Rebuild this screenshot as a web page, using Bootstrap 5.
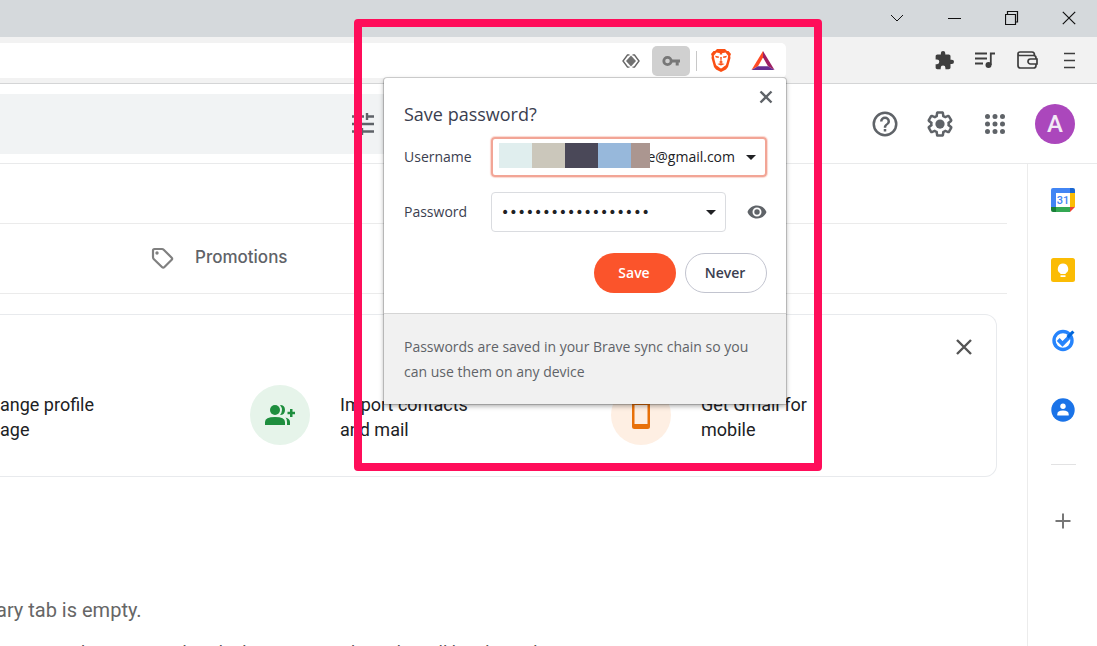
<!DOCTYPE html>
<html lang="en">
<head>
<meta charset="utf-8">
<meta name="viewport" content="width=device-width, initial-scale=1">
<title>Inbox - Gmail</title>
<link href="https://cdn.jsdelivr.net/npm/bootstrap@5.3.0/dist/css/bootstrap.min.css" rel="stylesheet">
<style>
  body { height: 100vh; overflow: hidden; font-family: Roboto, "Liberation Sans", sans-serif; color: #202124; background: #fff; }
  svg { display: block; flex: none; }
  .plain { border: 0; padding: 0; background: none; color: inherit; display: flex; align-items: center; justify-content: center; }

  /* browser chrome */
  .window-bar { height: 37px; background: #d5d9dc; }
  .window-bar .plain { width: 57px; height: 36px; color: #111; }
  .tool-bar { height: 47px; background: #f2f2f2; border-bottom: 1px solid #d4d5d6; color: #3e3e3e; }
  .address { height: 35px; background: #fff; border-radius: 0 5px 5px 0; margin-top: 6px; }
  .address .key-btn { width: 38px; height: 30px; border-radius: 5px; background: #d0d0d0; color: #777; }
  .split { width: 1px; height: 20px; background: #c8c8c8; margin: 0 14px 0 6px; }
  .shield { margin-right: 20px; }
  .rewards { margin-right: 11px; }
  .tool-icons { width: 311px; gap: 18px; padding-right: 16px; }
  .tool-icons .plain { width: 24px; height: 24px; }

  /* gmail header */
  .mail-head { height: 80px; border-bottom: 1px solid #e9eaeb; color: #5f6368; }
  .search { width: 64%; height: 60px; background: #f1f3f4; margin-top: 10px; }
  .search .plain { margin-left: 349px; }
  .head-icons { gap: 25px; padding-right: 22px; }
  .avatar { width: 40px; height: 40px; border-radius: 50%; background: #ab47bc; color: #f3e9f6; font-size: 24px; font-weight: 500; }

  /* mail area */
  .mail { padding-right: 20px; overflow: hidden; }
  .strip { height: 60px; border-bottom: 1px solid #ebebeb; }
  .tabs { height: 70px; border-bottom: 1px solid #ebebeb; color: #5f6368; padding-left: 150px; }
  .tabs a { color: inherit; font: 500 17px/24px Inter, sans-serif; gap: 20px; }
  .setup { margin: 20px 10px 0 0; height: 163px; border: 1px solid #e8eaed; border-left: 0; border-radius: 0 12px 12px 0; color: #555; }
  .steps { display: grid; grid-template-columns: 250px 361px 1fr; padding-top: 70px; align-items: center; }
  .steps a { color: #202124; font-size: 18px; line-height: 25px; gap: 30px; }
  .step-text { padding-top: 4px; }
  .disc { width: 60px; height: 60px; border-radius: 50%; }
  .disc-green { background: #e6f4ea; }
  .disc-orange { background: #feefe3; }
  .setup .plain { top: 22px; right: 22px; }
  .empty { margin: 120px 0 0 -4px; font-size: 20px; line-height: 26px; color: #666; }
  .hint { width: 573px; margin-top: 18px; font-size: 18px; line-height: 24px; color: #555; white-space: nowrap; }

  .side { width: 70px; border-left: 1px solid #ececec; padding: 22px 0 0 1px; gap: 42px; }
  .side .plain { width: 28px; height: 28px; }
  .side hr { width: 25px; margin: -2px 0 0; border-color: #8a8d91; }

  /* password bubble */
  .bubble { top: 78px; right: 311px; width: 402px; background: #fff; box-shadow: 0 0 0 1px rgba(0,0,0,.16), 0 2px 5px rgba(0,0,0,.35); font: 14px/25px "Open Sans", "Noto Sans", sans-serif; color: #3b3e4f; border-radius: 3px 3px 0 0; }
  .bubble-body { padding: 24px 19px 20px 20px; }
  .bubble h1 { font-size: 18px; line-height: 25px; margin: 0 0 10px; font-weight: 400; }
  .bubble label { width: 87px; padding-bottom: 2px; }
  .close-btn { top: 10px; right: 11px; color: #5f6368; width: 18px; height: 18px; }
  .pass-row { margin-top: 15px; }
  .choices { gap: 9px; margin-top: 21px; }
  .show-btn { margin-left: 21px; color: #5f6368; }
  .field { height: 40px; border: 1px solid #dadce0; border-radius: 4px; color: #202124; }
  .field input { border: 0; outline: 0; background: none; min-width: 0; padding: 0 0 2px; color: inherit; }
  .field .plain { width: 11px; margin: 0 9px 0 10px; }
  .field.active { border: 2px solid #f2a596; box-shadow: 0 0 1px 1px #fbd8d0; }
  .field input[type=password] { font-family: "DejaVu Sans", sans-serif; font-size: 14px; padding: 0 0 0 9px; }
  .mosaic { left: 6px; top: 4px; height: 25px; width: 151px; }
  .mosaic i { width: 33px; }
  .pill { width: 82px; height: 40px; border-radius: 20px; padding: 0 2px 2px 0; font-size: 14px; font-weight: 600; }
  .pill-save, .pill-save:hover { background: #fb542b; color: #fff; }
  .pill-never { border: 1px solid #c2c4cf; color: #3b3e4f; }
  .bubble-foot { padding: 20px; background: #f1f1f1; border-top: 1px solid #d5d5d5; color: #5f6368; }

  .marker { top: 19px; right: 275px; width: 468px; height: 452px; border: 8px solid #ff0d5a; border-radius: 4px; pointer-events: none; }
</style>
</head>
<body class="d-flex flex-column position-relative">

<div class="window-bar d-flex justify-content-end flex-shrink-0">
  <button class="plain" aria-label="Search tabs"><svg width="14" height="14" fill="none" stroke="currentColor"><path d="M0 4l6 6 6-6"/></svg></button>
  <button class="plain" aria-label="Minimize"><svg width="14" height="14" fill="none" stroke="currentColor"><path d="M0 7.500h13"/></svg></button>
  <button class="plain" aria-label="Restore"><svg width="14" height="14" fill="none" stroke="currentColor" stroke-width="1.200"><path d="M.5 3.500h10v10H.5zM2.500 3V.500h10v10.500H11"/></svg></button>
  <button class="plain" aria-label="Close"><svg width="14" height="14" fill="none" stroke="currentColor" stroke-width="1.200"><path d="M.8.8l12.400 12.400M13.200.8L.8 13.200"/></svg></button>
</div>

<div class="tool-bar d-flex flex-shrink-0">
  <div class="address flex-grow-1 d-flex align-items-center justify-content-end">
    <button class="plain me-2 pe-1" aria-label="Open link"><svg width="18" height="14" viewBox="0 0 18 14"><path d="M9 1.500l5 5.500-5 5.500L4 7z" fill="#707070"/><path d="M7.500.9L5.500 1 1 7l4.500 6 2 .1M10.500.9l2 .1L17 7l-4.500 6-2 .1" fill="none" stroke="#666" stroke-width="1.400"/></svg></button>
    <button class="plain key-btn" aria-label="Manage passwords"><svg width="18" height="12" viewBox="0 0 18 12"><circle cx="5.500" cy="6" r="3.700" fill="none" stroke="currentColor" stroke-width="2.800"/><path d="M9 4.600h9v3h-1.300v3h-3v-3H9z" fill="currentColor"/></svg></button>
    <span class="split"></span>
    <button class="plain shield" aria-label="Brave Shields"><svg width="20" height="23" viewBox="0 0 20 23"><path d="M6 0h8l2 2h1.500L20 5l-.8 2 .3 2-2.500 9-2 2.500L10 23l-5-2.500L3 18 .5 9l.3-2L0 5l2.500-3H4z" fill="#fb4f14"/><path d="M5.500 3.600L8 4h4l2.500-.4 2.700 3.200-.5 3-1.200 4.400-.7 2-1.500 1.100-2.300 1.600-1 .7-1-.7-2.300-1.600-1.500-1.100-.7-2-1.200-4.400-.5-3z" fill="#fff"/><path d="M4 6.800l4 .8-.4 1.300-2.700-.5zM16 6.800l-4 .8.400 1.300 2.700-.5zM9.200 8h1.600l-.3 4 1.500 1-2 1.200L8 13l1.500-1zM6.300 15l3.700-.9 3.700.9L10 16.600zM8.800 4h2.400v1.500H8.800z" fill="#fb4f14"/></svg></button>
    <button class="plain rewards" aria-label="Brave Rewards"><svg width="24" height="21" viewBox="0 0 24 21"><path d="M12 1v6.500L7 16.300.5 20z" fill="#ff4a24"/><path d="M12 1v6.500l5 8.800 6.500 3.700z" fill="#9e1f63"/><path d="M.5 20L7 16.300h10l6.500 3.700z" fill="#662d91"/></svg></button>
  </div>
  <div class="tool-icons d-flex align-items-center justify-content-end">
    <button class="plain" aria-label="Extensions"><svg width="21" height="21" viewBox="0 0 24 24" fill="currentColor"><path d="M21.500 11H20V7c0-1.100-.9-2-2-2h-4V3.500a2.500 2.500 0 0 0-5 0V5H5c-1.100 0-2 .9-2 2v3.800h1.500a2.700 2.700 0 0 1 0 5.400H3V20c0 1.100.9 2 2 2h3.800v-1.500a2.700 2.700 0 0 1 5.400 0V22H18c1.100 0 2-.9 2-2v-4h1.500a2.500 2.500 0 0 0 0-5z"/></svg></button>
    <button class="plain" aria-label="Media"><svg width="20" height="17" viewBox="0 0 20 17" fill="none" stroke="currentColor" stroke-width="1.800"><path d="M0 1.500h12M0 6.500h12M0 11.500h8M15.800 13V1.500H20"/><circle cx="13.500" cy="13" r="3" fill="currentColor" stroke="none"/></svg></button>
    <button class="plain" aria-label="Wallet"><svg width="21" height="18" viewBox="0 0 21 18" fill="none" stroke="currentColor" stroke-width="1.700"><path d="M1 3v11.500Q1 17 3.500 17h13q2.500 0 2.500-2.500V7q0-2.500-2.500-2.500h-14Q1 4.500 1 2.800T3 1h12q2.500 0 2.500 3"/><path d="M20 8h-6.500a2.500 2.500 0 0 0 0 5H20z" fill="#f2f2f2"/></svg></button>
    <button class="plain" aria-label="Menu"><svg width="12" height="17" viewBox="0 0 12 17" fill="none" stroke="currentColor" stroke-width="1.700"><path d="M1 1.500h11M1 8.500h11M1 15.500h11"/></svg></button>
  </div>
</div>

<header class="mail-head d-flex justify-content-between flex-shrink-0">
  <div class="search d-flex align-items-center">
    <button class="plain" aria-label="Search options"><svg width="28" height="24" viewBox="0 0 28 24" fill="none" stroke="currentColor" stroke-width="2.400"><path d="M3 4.500h12M18 4.500h7M3 12h22M3 19.500h7M13 19.500h12M18 1v7M13 16v7"/></svg></button>
  </div>
  <div class="head-icons d-flex align-items-center">
    <button class="plain" aria-label="Support"><svg width="30" height="30" viewBox="0 0 24 24" fill="currentColor"><path d="M11 18h2v-2h-2zm1-16a10 10 0 1 0 0 20 10 10 0 0 0 0-20zm0 18a8 8 0 1 1 0-16 8 8 0 0 1 0 16zm0-14a4 4 0 0 0-4 4h2a2 2 0 1 1 4 0c0 2-3 1.750-3 5h2c0-2.250 3-2.500 3-5a4 4 0 0 0-4-4z"/></svg></button>
    <button class="plain" aria-label="Settings"><svg width="30" height="30" viewBox="0 0 24 24" fill="currentColor"><path d="M13.850 22.250h-3.700c-.74 0-1.360-.54-1.450-1.270l-.27-1.890c-.27-.14-.53-.29-.79-.46l-1.800.72c-.7.260-1.470-.03-1.810-.65L2.200 15.530c-.35-.66-.2-1.440.36-1.880l1.530-1.190c-.01-.15-.02-.3-.02-.46 0-.15.010-.31.020-.46l-1.520-1.190c-.59-.45-.74-1.260-.37-1.880l1.850-3.190c.34-.62 1.110-.9 1.790-.63l1.810.73c.26-.17.520-.32.780-.46l.27-1.910c.09-.7.710-1.250 1.440-1.250h3.700c.74 0 1.360.54 1.450 1.270l.27 1.890c.27.140.53.290.79.460l1.800-.72c.71-.26 1.480.03 1.820.65l1.840 3.180c.36.660.2 1.440-.36 1.880l-1.520 1.190c.01.150.02.3.020.46s-.01.310-.02.460l1.520 1.190c.56.450.72 1.230.37 1.860l-1.860 3.220c-.34.620-1.110.9-1.800.63l-1.800-.72c-.26.170-.52.320-.78.460l-.27 1.910c-.1.680-.72 1.220-1.460 1.220zm-3.230-2h2.760l.37-2.550.53-.22c.44-.18.880-.44 1.340-.78l.45-.34 2.380.96 1.380-2.400-2.030-1.580.07-.56c.03-.26.060-.51.060-.78s-.03-.53-.06-.78l-.07-.56 2.030-1.580-1.390-2.400-2.390.96-.45-.35c-.42-.32-.87-.58-1.330-.77l-.52-.22-.37-2.550h-2.760l-.37 2.550-.53.210c-.44.190-.88.440-1.340.79l-.45.330-2.380-.95-1.390 2.390 2.030 1.580-.07.560a7 7 0 0 0-.06.790c0 .26.020.53.060.78l.07.560-2.030 1.580 1.380 2.400 2.390-.96.450.35c.43.330.86.580 1.330.77l.53.220z"/><circle cx="12" cy="12" r="3.700"/></svg></button>
    <button class="plain" aria-label="Google apps"><svg width="30" height="30" viewBox="0 0 24 24" fill="currentColor"><path d="M6 8a2 2 0 1 0 0-4 2 2 0 0 0 0 4zm6 0a2 2 0 1 0 0-4 2 2 0 0 0 0 4zm6 0a2 2 0 1 0 0-4 2 2 0 0 0 0 4zM6 14a2 2 0 1 0 0-4 2 2 0 0 0 0 4zm6 0a2 2 0 1 0 0-4 2 2 0 0 0 0 4zm6 0a2 2 0 1 0 0-4 2 2 0 0 0 0 4zM6 20a2 2 0 1 0 0-4 2 2 0 0 0 0 4zm6 0a2 2 0 1 0 0-4 2 2 0 0 0 0 4zm6 0a2 2 0 1 0 0-4 2 2 0 0 0 0 4z"/></svg></button>
    <button class="plain avatar" aria-label="Account">A</button>
  </div>
</header>

<div class="d-flex flex-grow-1 overflow-hidden">
  <main class="mail flex-grow-1">
    <div class="strip"></div>
    <nav class="tabs d-flex align-items-center">
      <a href="#" class="d-flex align-items-center text-decoration-none"><svg width="25" height="25" viewBox="0 0 25 25" fill="none" stroke="#808080" stroke-width="2.200"><path d="M3 4.500Q3 3 4.500 3H12q1 0 1.700.7l8 8q1 1 0 2l-7.500 7.500q-1 1-2 0L3.700 13Q3 12.300 3 11z"/><circle cx="7" cy="7" r="1.700" fill="#808080" stroke="none"/></svg><span class="pb-1">Promotions</span></a>
    </nav>
    <section class="setup position-relative">
      <button class="plain position-absolute" aria-label="Dismiss"><svg width="20" height="20" viewBox="0 0 20 20" fill="none" stroke="currentColor" stroke-width="2.400"><path d="M3 3l14 14M17 3L3 17"/></svg></button>
      <div class="steps">
        <a href="#" class="step-text text-decoration-none">ange profile<br>age</a>
        <a href="#" class="d-flex align-items-center text-decoration-none">
          <span class="disc disc-green d-flex align-items-center justify-content-center"><svg width="30" height="22" viewBox="0 0 30 22" fill="#1e8e3e"><circle cx="10" cy="6" r="5"/><path d="M0 21v-3q0-5 10-5t10 5v3zM15 1q5 0 5 5t-5 5q4-5 0-10zM20.500 13.600q4.500 1.200 4.500 4.400v3h-3v-3q0-3-1.500-4.400zM25 5h2.500v2.800H30v2.400h-2.500V13H25v-2.800h-2.500V7.800H25z"/></svg></span>
          <span class="step-text">Import contacts<br>and mail</span>
        </a>
        <a href="#" class="d-flex align-items-center text-decoration-none">
          <span class="disc disc-orange d-flex align-items-center justify-content-center"><svg width="18" height="28" viewBox="0 0 18 28"><path fill-rule="evenodd" d="M2.500 0h13Q18 0 18 2.500v23q0 2.500-2.500 2.500h-13Q0 28 0 25.500v-23Q0 0 2.500 0zM2.500 4v19h13V4z" fill="#e8710a"/></svg></span>
          <span class="step-text">Get Gmail for<br>mobile</span>
        </a>
      </div>
    </section>
    <p class="empty mb-0">ary tab is empty.</p>
    <p class="hint d-flex justify-content-end mb-0">Personal messages and messages that don’t appear in other tabs will be shown here.</p>
  </main>
  <aside class="side d-flex flex-column align-items-center flex-shrink-0">
    <button class="plain" aria-label="Calendar"><svg width="24" height="24" viewBox="0 0 24 24"><path d="M2 0h17v5H5v14H0V2q0-2 2-2z" fill="#4285f4"/><path d="M19 0h3q2 0 2 2v3h-5z" fill="#1967d2"/><path d="M19 5h5v14h-5z" fill="#fbbc04"/><path d="M0 19h5v5H2q-2 0-2-2z" fill="#188038"/><path d="M5 19h14v5H5z" fill="#34a853"/><path d="M19 19h5l-5 5z" fill="#ea4335"/><path d="M5 5h14v14H5z" fill="#fff"/><text x="12" y="16" font-family="Roboto" font-size="11" font-weight="500" fill="#4285f4" text-anchor="middle">31</text></svg></button>
    <button class="plain" aria-label="Keep"><svg width="24" height="24" viewBox="0 0 24 24"><rect width="24" height="24" rx="2.500" fill="#fbbc04"/><path d="M12 5.500a5.300 5.300 0 0 0-2.700 9.800V16h5.400v-.7A5.300 5.300 0 0 0 12 5.500zM9.500 17.300h5v1.700h-5z" fill="#fff"/></svg></button>
    <button class="plain" aria-label="Tasks"><svg width="24" height="24" viewBox="0 0 24 24"><circle cx="12" cy="12.500" r="9" fill="none" stroke="#2684fc" stroke-width="3.400"/><path d="M7.200 11.500l4.300 4.300L19 8.300" fill="none" stroke="#2684fc" stroke-width="4"/><path d="M15.500 8l5.800-5.600 2.200 2.200-5.800 5.900z" fill="#0066da"/></svg></button>
    <button class="plain" aria-label="Contacts"><svg width="24" height="24" viewBox="0 0 24 24"><circle cx="12" cy="12" r="11.700" fill="#1a73e8"/><circle cx="12" cy="8.300" r="2.700" fill="#fff"/><path d="M6.300 17.500v-1.300q0-3.700 5.700-3.700t5.700 3.700v1.300z" fill="#fff"/></svg></button>
    <hr>
    <button class="plain" aria-label="Get add-ons"><svg width="16" height="16" fill="none" stroke="#777" stroke-width="2"><path d="M8 .5v15M.5 8h15"/></svg></button>
  </aside>
</div>

<form class="bubble position-absolute">
  <div class="bubble-body">
    <button type="button" class="plain close-btn position-absolute" aria-label="Close"><svg width="14" height="14" fill="none" stroke="currentColor" stroke-width="2.400"><path d="M1.500 1.500l11 11M12.500 1.500l-11 11"/></svg></button>
    <h1>Save password?</h1>
    <div class="d-flex align-items-center">
      <label for="user">Username</label>
      <div class="field active flex-grow-1 d-flex align-items-center position-relative">
        <input id="user" class="flex-grow-1 text-end" value="e@gmail.com">
        <span class="mosaic position-absolute d-flex overflow-hidden">
          <i class="flex-shrink-0 h-100" style="background:#e0eeee"></i><i class="flex-shrink-0 h-100" style="background:#cbc7bb"></i><i class="flex-shrink-0 h-100" style="background:#4a4858"></i><i class="flex-shrink-0 h-100" style="background:#97b8db"></i><i class="flex-shrink-0 h-100" style="background:#ab9690"></i>
        </span>
        <button type="button" class="plain" aria-label="Choose username"><svg width="10" height="5" fill="currentColor"><path d="M0 0h10L5 5z"/></svg></button>
      </div>
    </div>
    <div class="pass-row d-flex align-items-center">
      <label for="pass">Password</label>
      <div class="field flex-grow-1 d-flex align-items-center">
        <input id="pass" type="password" class="flex-grow-1" value="aaaaaaaaaaaaaaaaaa">
        <button type="button" class="plain" aria-label="Choose password"><svg width="10" height="5" fill="currentColor"><path d="M0 0h10L5 5z"/></svg></button>
      </div>
      <button type="button" class="plain show-btn" aria-label="Show password"><svg width="20" height="14" viewBox="0 0 20 14"><path fill-rule="evenodd" d="M10 .5C5.500.5 2 3 .5 7 2 11 5.500 13.500 10 13.500S18 11 19.500 7C18 3 14.500.5 10 .5zm0 11A4.500 4.500 0 1 1 10 2.500a4.500 4.500 0 0 1 0 9zm0-7.200a2.700 2.700 0 1 0 0 5.400 2.700 2.700 0 0 0 0-5.400z" fill="currentColor"/></svg></button>
    </div>
    <div class="choices d-flex justify-content-end">
      <button type="button" class="btn pill pill-save">Save</button>
      <button type="button" class="btn pill pill-never">Never</button>
    </div>
  </div>
  <div class="bubble-foot">Passwords are saved in your Brave sync chain so you can use them on any device</div>
</form>

<div class="marker position-absolute"></div>

<script src="https://cdn.jsdelivr.net/npm/bootstrap@5.3.0/dist/js/bootstrap.bundle.min.js"></script>
</body>
</html>
